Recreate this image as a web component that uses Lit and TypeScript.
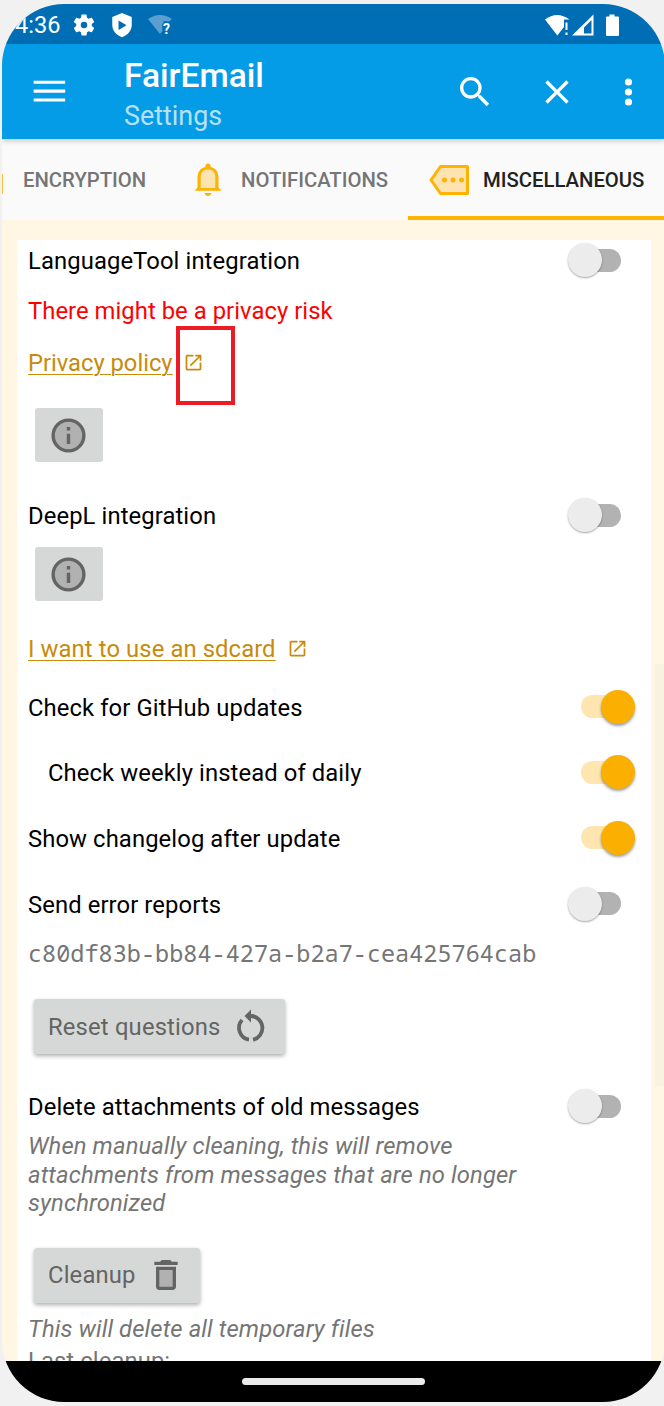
import { LitElement, html, css, svg } from "lit";
import { customElement, property } from "lit/decorators.js";

@customElement("toggle-switch")
class ToggleSwitch extends LitElement {
  @property({ type: Boolean, reflect: true }) on = false;
  static styles = css`
    :host { display: flex; align-items: center; width: 54px; height: 36px; flex: none; }
    .track { width: 40px; height: 23px; border-radius: 12px; background: #b2b2b2; display: flex; align-items: center; margin-left: 14px; }
    .thumb { width: 34px; height: 34px; border-radius: 50%; flex: none; background: #ececec; margin-left: -13.500px; box-shadow: 0 1px 2px rgba(0,0,0,.35); }
    :host([on]) .track { background: #ffe6b0; margin-left: 0; }
    :host([on]) .thumb { background: #fbaf00; margin-left: 19.500px; box-shadow: 0 2px 3px rgba(0,0,0,.38); }
  `;
  render() {
    return html`<div class="track"><div class="thumb"></div></div>`;
  }
}

const infoIcon = svg`<svg width="41" height="41" viewBox="0 0 24 24"><circle cx="12" cy="12" r="9" fill="#b0b1b0" stroke="#636463" stroke-width="2"/><path fill="#636463" d="M11 7h2v2h-2zM11 11h2v6h-2z"/></svg>`;
const openIcon = svg`<svg width="21" height="21" viewBox="0 0 24 24"><path fill="#c98a0b" d="M19 19H5V5h7V3H5c-1.110 0-2 .9-2 2v14c0 1.100.890 2 2 2h14c1.100 0 2-.9 2-2v-7h-2v7zM14 3v2h3.590l-9.830 9.830 1.410 1.410L19 6.410V10h2V3h-7z"/></svg>`;

@customElement("app-root")
class AppRoot extends LitElement {
  static styles = css`
    :host { display: block; width: 664px; height: 1406px; background: #f1f1f2; overflow: hidden; font-family: Roboto, "Noto Sans", sans-serif; color: #000; }
    * { box-sizing: border-box; }
    svg { display: block; flex: none; }
    .stage { padding: 4px 0 4px 2px; height: 1406px; }
    .phone { position: relative; width: 663px; height: 1398px; border-radius: 62px; overflow: hidden; display: flex; flex-direction: column; background: #fff6e3; }
    .status { height: 40px; flex: none; background: #006eb5; color: #fff; display: flex; align-items: center; padding: 1px 45px 0 13px; font-size: 23.600px; }
    .status .gear { margin-left: 10px; }
    .status .shield { margin-left: 12px; }
    .status .wifi { margin-left: 12px; }
    .status .signals { margin-left: auto; display: flex; align-items: center; }
    .bar { height: 95px; flex: none; background: #049be7; color: #fff; display: flex; align-items: center; padding: 0 35px 0 27px; box-shadow: 0 2px 5px rgba(0,0,0,.2); z-index: 1; }
    .titles { margin-left: 54px; flex: 1; padding-top: 8px; }
    .title { font-size: 33.600px; font-weight: 500; line-height: 40px; }
    .subtitle { font-size: 26.900px; line-height: 40px; color: #b4e1f8; }
    .actions { display: flex; align-items: center; }
    .close { margin-left: 42px; }
    .more { margin-left: 42px; margin-right: -9px; }
    .tabs { height: 81px; flex: none; background: #fafafa; display: flex; font-size: 20.300px; font-weight: 500; color: #757575; white-space: nowrap; }
    .sliver { width: 1px; height: 20px; background: #ffb300; margin-top: 35px; opacity: .8; }
    .tab { display: flex; align-items: center; padding-top: 1px; }
    .tab.enc { margin-left: 20px; width: 170px; }
    .tab.notif { width: 215px; gap: 20px; }
    .tab.notif svg { margin-left: .5px; margin-right: -.5px; }
    .tab.misc { width: 257px; padding-left: 21px; gap: 13px; color: #212121; border-bottom: 4px solid #ffb300; padding-top: 5px; }
    .content { flex: 1; min-height: 0; padding: 20px 14px 0 15px; overflow: hidden; }
    .card { background: #fff; height: 1200px; padding: 0 30px 0 11px; font-size: 23.800px; letter-spacing: .1px; }
    .row { display: flex; justify-content: space-between; align-items: center; height: 42px; }
    .row toggle-switch { position: relative; top: -1px; }
    .row.on { margin-right: -14px; }
    .row.indent { padding-left: 20px; }
    .row.tall { height: 65.600px; }
    .risk { color: #f00; height: 57px; display: flex; align-items: center; letter-spacing: .05px; }
    .link { display: flex; align-items: center; color: #c98a0b; height: 48px; }
    .link span { text-decoration: underline; text-decoration-thickness: 1px; text-underline-offset: 3px; }
    .privacy { letter-spacing: -.03px; }
    .info { width: 68px; height: 54px; border-radius: 3px; background: #d6d8d7; display: flex; align-items: center; justify-content: center; margin-left: 6.500px; }
    .info.first { margin-top: 21px; margin-bottom: 33px; }
    .info.second { margin-top: 10px; margin-bottom: 24px; }
    .sd { margin-bottom: 2px; }
    .privacy svg { margin-left: 10px; margin-top: -2px; }
    .sd svg { margin-left: 11px; margin-top: -2px; }
    .uuid { height: 34px; line-height: 32px; font-family: "Droid Sans Mono", "Noto Sans Mono", "Liberation Mono", monospace; font-size: 23.500px; letter-spacing: .02px; color: #757575; white-space: nowrap; }
    .button { height: 55px; border-radius: 3px; background: #d6d8d7; color: #636463; display: flex; align-items: center; justify-content: space-between; padding: 0 14px; margin-left: 6px; box-shadow: 0 2px 4px rgba(0,0,0,.32); letter-spacing: .17px; }
    .reset { margin-top: 28px; margin-bottom: 32px; width: 251px; }
    .cleanup { margin-top: 30.500px; margin-bottom: 12px; width: 166px; }
    .note { font-style: italic; color: #757575; line-height: 28.300px; width: 520px; letter-spacing: .12px; }
    .note.first { margin-top: 4px; }
    .last { color: #757575; line-height: 28px; margin-top: 4px; }
    .nav { height: 41px; flex: none; background: #000; display: flex; align-items: center; justify-content: center; }
    .pill { width: 183px; height: 7px; border-radius: 4px; background: #ebebeb; }
    .scroll { position: absolute; right: 1px; top: 660px; width: 9px; height: 422px; background: #faf2e0; }
    .mark { position: absolute; left: 174px; top: 322px; width: 59px; height: 79px; border: 4px solid #ed1c24; }
  `;

  render() {
    return html`<div class="stage"><div class="phone">
      <div class="status">
        <span>4:36</span>
        <svg class="gear" width="26" height="26" viewBox="0 0 24 24"><path fill="#fff" d="M19.140 12.940c.040-.3.060-.610.060-.940 0-.320-.020-.640-.070-.940l2.030-1.580c.180-.140.230-.410.120-.610l-1.920-3.320c-.120-.220-.370-.290-.590-.220l-2.390.960c-.5-.380-1.030-.7-1.620-.940l-.360-2.540c-.040-.240-.240-.410-.480-.410h-3.840c-.240 0-.430.170-.470.410l-.360 2.540c-.590.240-1.130.570-1.620.940l-2.390-.960c-.220-.080-.470 0-.590.220L2.740 8.870c-.120.210-.080.470.120.610l2.030 1.580c-.050.3-.090.630-.090.940s.020.640.070.940l-2.030 1.580c-.180.140-.230.410-.120.610l1.920 3.320c.120.220.370.290.590.220l2.390-.960c.5.380 1.030.7 1.620.940l.360 2.540c.050.240.240.410.480.410h3.840c.240 0 .440-.170.470-.410l.360-2.540c.590-.240 1.130-.560 1.620-.940l2.390.960c.220.080.470 0 .590-.220l1.920-3.320c.120-.220.070-.470-.120-.610l-2.010-1.580zM12 15a3 3 0 110-6 3 3 0 010 6z"/></svg>
        <svg class="shield" width="26" height="26" viewBox="0 0 24 24"><path fill="#fff" fill-rule="evenodd" d="M12 1L3 4.500v7.500c0 5.200 3.800 9.400 9 11.200 5.200-1.800 9-6 9-11.200V4.500zM8.800 7.800v8.800l7.400-4.400z"/></svg>
        <svg class="wifi" width="27" height="24" viewBox="0 0 27 24"><path fill="#5b9fd0" d="M1 6Q13 -2 25 6L22 8.500 17 8 15 12 15.500 18 13 21z"/><text x="16" y="21" font-size="14" font-weight="700" fill="#fff" font-family="Roboto">?</text></svg>
        <div class="signals">
          <svg width="76" height="24" viewBox="0 0 76 24"><path fill="#fff" d="M1 6.500Q13 -2.500 25.500 6.500H20V14L13.300 22.500z"/><path fill="#fff" d="M21.500 9.500h2v7.500h-2zM21.500 19.500h2v2.500h-2z"/><path fill="#fff" fill-rule="evenodd" d="M49.500 1.500v21h-21.500zM47.500 7L40 14.500v6h7.500z"/><path fill="#fff" d="M65.500 1.500h5v2H74q1 0 1 1V22q0 1-1 1H63q-1 0-1-1V4.500q0-1 1-1h2.500z"/></svg>
        </div>
      </div>
      <div class="bar">
        <svg width="41" height="41" viewBox="0 0 24 24"><path fill="#fff" d="M2.700 17.900h18.500v-1.800H2.700zM2.700 12.700h18.500v-1.800H2.700zM2.700 5.700v1.800h18.500V5.700z"/></svg>
        <div class="titles"><div class="title">FairEmail</div><div class="subtitle">Settings</div></div>
        <div class="actions">
          <svg width="40" height="40" viewBox="0 0 24 24"><path fill="#fff" d="M15.500 14h-.790l-.280-.270A6.471 6.471 0 0016 9.500 6.500 6.500 0 109.500 16c1.610 0 3.090-.590 4.230-1.570l.270.280v.790l5 4.990L20.490 19l-4.990-5zm-6 0C7.010 14 5 11.990 5 9.500S7.010 5 9.500 5 14 7.010 14 9.500 11.990 14 9.500 14z"/></svg>
          <svg class="close" width="40" height="40" viewBox="0 0 24 24"><path fill="#fff" d="M19 6.410L17.590 5 12 10.590 6.410 5 5 6.410 10.590 12 5 17.590 6.410 19 12 13.410 17.590 19 19 17.590 13.410 12z"/></svg>
          <svg class="more" width="20" height="40" viewBox="0 0 20 40"><g fill="#fff"><circle cx="9.500" cy="10" r="3.600"/><circle cx="9.500" cy="20" r="3.600"/><circle cx="9.500" cy="30" r="3.600"/></g></svg>
        </div>
      </div>
      <div class="tabs">
        <div class="sliver"></div>
        <div class="tab enc">ENCRYPTION</div>
        <div class="tab notif">
          <svg width="28" height="34" viewBox="0 0 28 34"><path fill="#fde3b0" d="M5 27V14q0-9 9-9t9 9v13z"/><path fill="#ffb300" fill-rule="evenodd" d="M11.500 3a2.500 2.500 0 015 0v.8Q24.500 6 24.500 14v10.500l3 3.300H.5l3-3.300V14Q3.500 6 11.500 3.800zM6.700 25h14.600V14q0-7.500-7.300-7.500T6.700 14zM10.700 30h6.600q-.5 3-3.300 3t-3.300-3z"/></svg>
          <span>NOTIFICATIONS</span>
        </div>
        <div class="tab misc">
          <svg width="41" height="32" viewBox="0 0 41 32"><path fill="#fde3b0" stroke="#ffb300" stroke-width="3" stroke-linejoin="round" d="M11.500 2.500H38.500V29.500H11.500L2 16z"/><g fill="#ffb300"><circle cx="15.500" cy="16" r="2.500"/><circle cx="24" cy="16" r="2.500"/><circle cx="32.500" cy="16" r="2.500"/></g></svg>
          <span>MISCELLANEOUS</span>
        </div>
      </div>
      <div class="content"><div class="card">
        <div class="row"><span>LanguageTool integration</span><toggle-switch></toggle-switch></div>
        <div class="risk">There might be a privacy risk</div>
        <div class="link privacy"><span>Privacy policy</span>${openIcon}</div>
        <div class="info first">${infoIcon}</div>
        <div class="row"><span>DeepL integration</span><toggle-switch></toggle-switch></div>
        <div class="info second">${infoIcon}</div>
        <div class="link sd"><span>I want to use an sdcard</span>${openIcon}</div>
        <div class="row tall on"><span>Check for GitHub updates</span><toggle-switch on></toggle-switch></div>
        <div class="row tall on indent"><span>Check weekly instead of daily</span><toggle-switch on></toggle-switch></div>
        <div class="row tall on"><span>Show changelog after update</span><toggle-switch on></toggle-switch></div>
        <div class="row tall"><span>Send error reports</span><toggle-switch></toggle-switch></div>
        <div class="uuid">c80df83b-bb84-427a-b2a7-cea425764cab</div>
        <div class="button reset"><span>Reset questions</span>
          <svg width="40" height="40" viewBox="0 0 40 40"><g fill="none" stroke="#636463" stroke-width="3.800"><path d="M20 9A12 12 0 0122 32.700"/><path d="M18 32.700A12 12 0 0111 13"/></g><path fill="#636463" d="M20 2.500V15.500L13.500 9z"/></svg>
        </div>
        <div class="row"><span>Delete attachments of old messages</span><toggle-switch></toggle-switch></div>
        <div class="note first">When manually cleaning, this will remove attachments from messages that are no longer synchronized</div>
        <div class="button cleanup"><span>Cleanup</span>
          <svg width="40" height="40" viewBox="0 0 24 24"><path fill="#b0b1b0" d="M7 8h10v12H7z"/><path fill="#636463" fill-rule="evenodd" d="M6 7v12c0 1.100.9 2 2 2h8c1.100 0 2-.9 2-2V7zM8 9h8v10H8zM15.500 4l-1-1h-5l-1 1H5v2h14V4z"/></svg>
        </div>
        <div class="note">This will delete all temporary files</div>
        <div class="last">Last cleanup:</div>
      </div></div>
      <div class="nav"><div class="pill"></div></div>
      <div class="scroll"></div>
      <div class="mark"></div>
    </div></div>`;
  }
}
